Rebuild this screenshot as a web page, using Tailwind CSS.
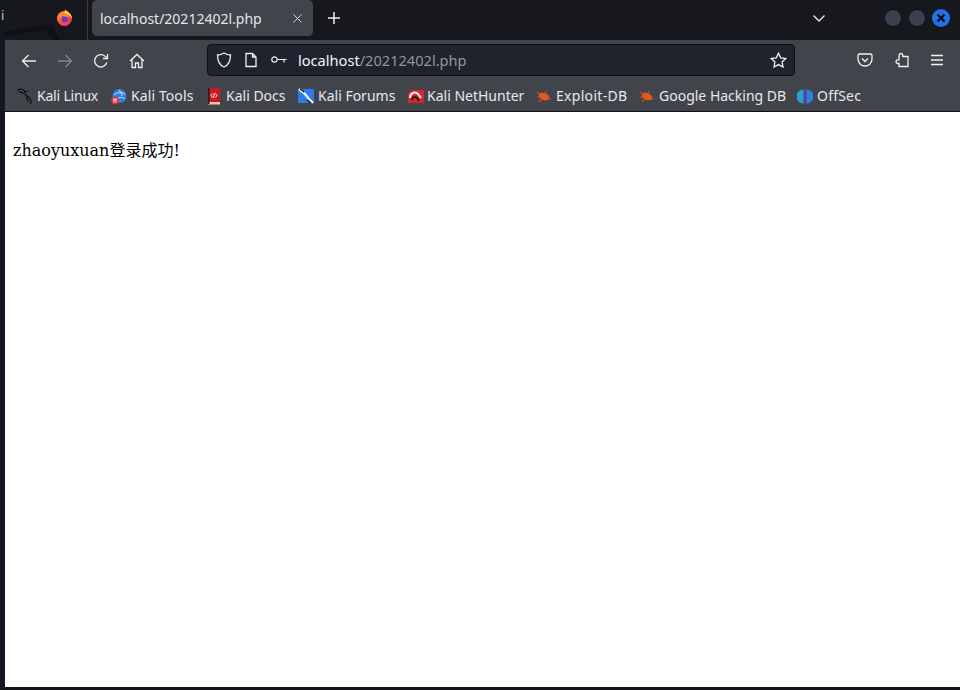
<!DOCTYPE html>
<html lang="zh">
<head>
  <meta charset="UTF-8">
  <title>localhost/20212402l.php</title>
  <script src="https://cdn.jsdelivr.net/npm/@tailwindcss/browser@4"></script>
</head>
<body class="w-[960px] h-[690px] overflow-hidden bg-[#14151b] font-['Noto_Sans',sans-serif]">
  <div class="flex h-[690px]">
    <!-- desktop edge -->
    <div class="w-[5px] shrink-0 bg-[#14171f]"></div>

    <div class="flex-1 flex flex-col min-w-0">
      <!-- title bar -->
      <div class="relative h-[40px] shrink-0 bg-[#17181e] flex items-start">
        <span class="absolute left-[-4px] top-[5px] text-[13px] leading-[20px] text-[#c8c8c8]">i</span>
        <svg class="absolute left-0 top-[25px]" width="60" height="15" viewBox="0 0 60 15"><path d="M0 7 Q20 2 47 0 L55 15 L48 15 L42 5 Q20 7 0 12Z" fill="#101116"/></svg>
        <div class="w-[83px] h-[40px] shrink-0 border-r border-[#3a3b42] flex items-start justify-end pr-[14px] pt-[9px]">
          <svg width="17" height="17" viewBox="0 0 17 17">
            <defs><linearGradient id="fx" x1="0" y1="0" x2="1" y2="1"><stop offset="0" stop-color="#ffb52e"/><stop offset=".5" stop-color="#ff4f3a"/><stop offset="1" stop-color="#f0207e"/></linearGradient></defs>
            <circle cx="8.500" cy="9.500" r="7.500" fill="url(#fx)"/>
            <path d="M9.500 .5 C11 3 15.500 4 16 9.500 C13.500 5.500 10 5.500 8 3.500Z" fill="#ffd23a"/>
            <circle cx="8.800" cy="10" r="3.200" fill="#6a3ac8"/>
            <path d="M5 7 C7 5 11.500 5 13 8.500 C10.500 7 7.500 8 5 7Z" fill="#ff9a2e"/>
          </svg>
        </div>
        <div class="ml-[4px] w-[221px] h-[36px] rounded-[5px] bg-[#42444c] flex items-center pl-[8px] pr-[10px] justify-between text-[14px] text-[#e4e5e8]">
          <span>localhost/20212402l.php</span>
          <svg width="11" height="11" viewBox="0 0 11 11" fill="none" stroke="#d6d7da" stroke-width="1"><path d="M1.500 1.500l8 8M9.500 1.500l-8 8"/></svg>
        </div>
        <svg class="ml-[14px] mt-[11px]" width="14" height="14" viewBox="0 0 14 14" fill="none" stroke="#f0f0f2" stroke-width="1.500"><path d="M7 1v12M1 7h12"/></svg>
        <svg class="absolute left-[807px] top-[12px]" width="14" height="12" viewBox="0 0 14 12" fill="none" stroke="#e6e6e8" stroke-width="1.400"><path d="M1.500 3.500L7 9l5.500-5.500"/></svg>
        <div class="absolute left-[879px] top-[9px] flex gap-[6px]">
          <span class="w-[18px] h-[18px] rounded-full bg-[#3b404e] border border-[#0f1014]"></span>
          <span class="w-[18px] h-[18px] rounded-full bg-[#3b404e] border border-[#0f1014]"></span>
          <span class="w-[18px] h-[18px] rounded-full bg-[#2470e8] flex items-center justify-center">
            <svg width="10" height="10" viewBox="0 0 10 10" fill="none" stroke="#0c0d14" stroke-width="2.200"><path d="M1.500 1.500l7 7M8.500 1.500l-7 7"/></svg>
          </span>
        </div>
      </div>

      <!-- nav toolbar -->
      <div class="h-[42px] shrink-0 bg-[#42444c] flex items-center relative">
        <div class="flex items-center gap-[20px] pl-[16px]">
          <svg width="16" height="16" viewBox="0 0 16 16" fill="none" stroke="#f0f0f2" stroke-width="1.300"><path d="M15 8H1.500M7.500 2L1.500 8l6 6"/></svg>
          <svg width="16" height="16" viewBox="0 0 16 16" fill="none" stroke="#85868c" stroke-width="1.300"><path d="M1 8h13.500M8.500 2l6 6-6 6"/></svg>
          <svg width="16" height="16" viewBox="0 0 16 16" fill="none" stroke="#f0f0f2" stroke-width="1.300"><path d="M13.800 9.500A6.200 6.200 0 1 1 12 3.200L14.500 5"/><path d="M14.500 1v4.500H10"/></svg>
          <svg width="16" height="16" viewBox="0 0 16 16" fill="none" stroke="#f0f0f2" stroke-width="1.300"><path d="M1 8l7-6.500L15 8M3 6.500V14.500h3.500V10h3v4.500H13V6.500"/></svg>
        </div>
        <div class="absolute left-[202px] top-[4px] w-[588px] h-[32px] rounded-[4px] bg-[#20222e] border border-[#0f1014] flex items-center pl-[8px] pr-[7px]">
          <svg width="16" height="16" viewBox="0 0 16 16" fill="none" stroke="#f0f0f2" stroke-width="1.300"><path d="M8 1c2 1.300 4 2 6.500 2C14.500 9 13 13 8 15 3 13 1.500 9 1.500 3 4 3 6 2.300 8 1z"/></svg>
          <svg class="ml-[12px]" width="14" height="16" viewBox="0 0 14 16" fill="none" stroke="#f0f0f2" stroke-width="1.300"><path d="M2 1.500h6.500l3.500 3.500v9.500H2zM8.500 1.500V5H12"/></svg>
          <svg class="ml-[13px]" width="16" height="10" viewBox="0 0 16 10" fill="none" stroke="#f0f0f2" stroke-width="1.200"><circle cx="3.500" cy="4.500" r="2.700"/><path d="M6.500 4.500h9M13 4.500v3"/></svg>
          <span class="ml-[11px] pt-[2px] text-[14.600px] text-[#f4f4f6]">localhost<span class="text-[#92949c]">/20212402l.php</span></span>
          <svg class="ml-auto" width="17" height="16" viewBox="0 0 17 16" fill="none" stroke="#f0f0f2" stroke-width="1.300"><path d="M8.500 1.200l2.200 4.600 5 .7-3.600 3.500.9 5-4.500-2.400L4 15l.9-5L1.300 6.500l5-.7z"/></svg>
        </div>
        <div class="absolute left-[852px] top-[12px] flex items-center">
          <svg width="16" height="16" viewBox="0 0 16 16" fill="none" stroke="#f0f0f2" stroke-width="1.300"><path d="M2.500 2h11A1.500 1.500 0 0 1 15 3.500V7A7 7 0 0 1 1 7V3.500A1.500 1.500 0 0 1 2.500 2z"/><path d="M5 6.500L8 9.500l3-3"/></svg>
          <svg class="ml-[21px]" width="16" height="16" viewBox="0 0 16 16" fill="none" stroke="#f0f0f2" stroke-width="1.300"><path d="M7 1.500a1.800 1.800 0 0 1 1.800 1.800V4.500H14v10H5v-3H3.800a1.800 1.800 0 0 1 0-3.600H5V4.500h.2V3.300A1.800 1.800 0 0 1 7 1.500z"/></svg>
          <svg class="ml-[20px]" width="14" height="12" viewBox="0 0 14 12" fill="none" stroke="#f0f0f2" stroke-width="1.300"><path d="M1 1.500h12M1 6h12M1 10.500h12"/></svg>
        </div>
      </div>

      <!-- bookmarks -->
      <div class="h-[30px] shrink-0 bg-[#42444c] border-b border-[#0f1014] flex items-center pb-[1px] pl-[12px] text-[14px] leading-[20px] text-[#e8e8ea] whitespace-nowrap">
        <svg width="17" height="17" viewBox="0 0 17 17" fill="none" stroke="#0b0b0e" stroke-width="1.200"><path d="M0.500 2.500C3 0.500 6 1 7.500 3c1 1.500 0 3 1.500 4.500 1.500 1.300 3.500 1.800 4.500 4 .6 1.300.6 2.800.5 4.500M2 4.500c2-.8 3.500 0 4.500 1.500M8 3.500l3.500 0M9.500 8.500c.5 2 1.800 3.500 1.500 6"/></svg>
        <span class="ml-[3px] w-[62px] tracking-[-0.2px]">Kali Linux</span>
        <svg class="ml-[12px]" width="16" height="17" viewBox="0 0 16 17"><circle cx="8.500" cy="8" r="7" fill="#2f7fd8"/><path d="M3 7c3-3 7-3 11-1M6 11c3-2 6-2 8 0M8 2c2 2 3 4 3 6" fill="none" stroke="#cfe4f8" stroke-width="1"/><circle cx="4" cy="12.500" r="3.800" fill="#e4302e"/><path d="M2.500 11h3M3 11v3.500M5 11v3.500" stroke="#fff" stroke-width=".9" fill="none"/></svg>
        <span class="ml-[4px] w-[63px] tracking-[0.1px]">Kali Tools</span>
        <svg class="ml-[13px]" width="14" height="18" viewBox="0 0 14 18"><rect x="1" y="1" width="12" height="15" fill="#c81a1e"/><rect x="1" y="15" width="12" height="2.500" fill="#e8c9a8"/><rect x="1" y="1" width="1.500" height="16" fill="#3a1214"/><path d="M5.500 6.500L4 8.500l1.500 2M8.500 6.500L10 8.500l-1.500 2M7.500 6l-1 5" stroke="#fff" stroke-width=".9" fill="none"/></svg>
        <span class="ml-[5px] w-[59px]">Kali Docs</span>
        <svg class="ml-[13px]" width="16" height="16" viewBox="0 0 16 16"><rect x="0" y="1" width="16" height="14" fill="#2b7be8"/><path d="M1 1l6 5 4 5 4 4" stroke="#f2f2f2" stroke-width="2.400" fill="none"/><path d="M2 1l4 3M9 12l4 3" stroke="#111" stroke-width="1.200"/></svg>
        <span class="ml-[4px] w-[77px]">Kali Forums</span>
        <svg class="ml-[13px]" width="16" height="16" viewBox="0 0 16 16"><path d="M3 2h13v13H0V6z" fill="#d9252c"/><path d="M2 10c0-5 5-7 8-4l3 4" stroke="#f2f2f2" stroke-width="2" fill="none"/><path d="M4 12c0-3 3-4 5-2l2 3" stroke="#111" stroke-width="1.500" fill="none"/></svg>
        <span class="ml-[3px] w-[97px]">Kali NetHunter</span>
        <svg class="ml-[12px]" width="16" height="16" viewBox="0 0 16 16"><ellipse cx="8" cy="8.500" rx="5.500" ry="3.500" fill="#e25a18" transform="rotate(20 8 8.500)"/><path d="M1 4l4 3M3 14l3-3M10 3l-1 3M15 11l-3-1M1 9h3" stroke="#c9521a" stroke-width="1.100"/></svg>
        <span class="ml-[4px] w-[71px] tracking-[0.3px]">Exploit-DB</span>
        <svg class="ml-[12px]" width="16" height="16" viewBox="0 0 16 16"><ellipse cx="8" cy="8.500" rx="5.500" ry="3.500" fill="#e25a18" transform="rotate(20 8 8.500)"/><path d="M1 4l4 3M3 14l3-3M10 3l-1 3M15 11l-3-1M1 9h3" stroke="#c9521a" stroke-width="1.100"/></svg>
        <span class="ml-[4px] w-[126px]">Google Hacking DB</span>
        <svg class="ml-[12px]" width="16" height="17" viewBox="0 0 16 17"><path d="M6.500 1.500A7 7 0 0 0 6.500 15.500z" fill="#2b9fd0"/><path d="M9.500 1.500a7 7 0 0 1 0 14z" fill="#2f7fe0"/><rect x="7.400" y="1" width="1.200" height="16" fill="#6a3ac8"/></svg>
        <span class="ml-[4px] tracking-[0.2px]">OffSec</span>
      </div>

      <!-- page -->
      <main class="h-[575px] shrink-0 bg-white pl-[8px] pt-[29px] font-['DejaVu_Serif','Noto_Sans_CJK_SC',serif] text-[16px] leading-[19px] text-black">
        <p>zhaoyuxuan登录成功!</p>
      </main>
    </div>
  </div>
</body>
</html>
